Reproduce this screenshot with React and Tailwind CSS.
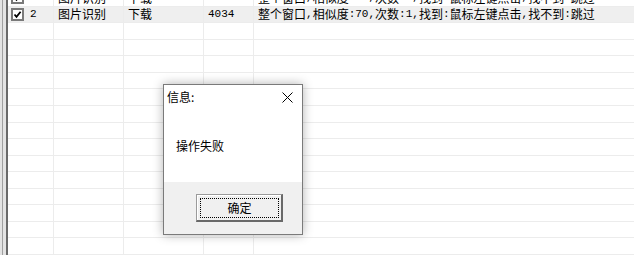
const rows = [
  {
    no: "1",
    type: "图片识别",
    action: "下载",
    id: "4032",
    desc: "整个窗口,相似度:80,次数:1,找到:鼠标左键点击,找不到:跳过",
  },
  {
    no: "2",
    type: "图片识别",
    action: "下载",
    id: "4034",
    desc: "整个窗口,相似度:70,次数:1,找到:鼠标左键点击,找不到:跳过",
    selected: true,
  },
];

const EMPTY_ROWS = 14;

// SimSun-like half width latin: monospace runs keep ~6px per char
const Mixed = ({ text }) =>
  text.split(/([\x00-\x7f]+)/).map((part, i) =>
    /^[\x00-\x7f]+$/.test(part) ? (
      <span key={i} className="font-['Liberation_Mono',monospace] text-[11px]">
        {part}
      </span>
    ) : (
      <span key={i}>{part}</span>
    )
  );

const CheckBox = () => (
  <svg width="13" height="13" viewBox="0 0 13 13" className="shrink-0">
    <rect x="1" y="1" width="11" height="11" fill="#fff" stroke="#7a7a7a" strokeWidth="2" />
    <path d="M3.5 6.5 L5.5 8.8 L9.6 3.8" fill="none" stroke="#000" strokeWidth="1.8" />
  </svg>
);

const Cell = ({ className = "", children }) => (
  <div
    className={`h-full flex items-center border-r border-[#ececec] overflow-hidden whitespace-nowrap ${className}`}
  >
    {children}
  </div>
);

const Row = ({ row }) => (
  <div
    className={`flex h-[17px] border-b border-[#ececec] ${
      row?.selected ? "bg-[#efefef]" : "bg-white"
    }`}
  >
    <Cell className="w-[46px] pl-[3px] gap-[3px]">
      {row && (
        <>
          <CheckBox />
          <Mixed text={row.no} />
        </>
      )}
    </Cell>
    <Cell className="w-[70px] pl-[4px]">{row && row.type}</Cell>
    <Cell className="w-[80px] pl-[4px]">{row && row.action}</Cell>
    <Cell className="w-[50px] pl-[4px]">{row && <Mixed text={row.id} />}</Cell>
    <Cell className="flex-1 pl-[4px] border-r-0">{row && <Mixed text={row.desc} />}</Cell>
  </div>
);

const MessageDialog = () => (
  <div className="absolute left-[163px] top-[84px] w-[140px] h-[151px] border border-[#7a7a7a] bg-white flex flex-col shadow-[0_0_10px_rgba(0,0,0,0.3)]">
    <div className="h-[24px] flex items-center justify-between pl-[3px] pr-[9px]">
      <span>信息:</span>
      <svg width="11" height="11" viewBox="0 0 11 11">
        <path d="M0.5 0.5 L10.5 10.5 M10.5 0.5 L0.5 10.5" stroke="#000" strokeWidth="1" />
      </svg>
    </div>
    <div className="flex-1 pl-[12px] pt-[31px]">操作失败</div>
    <div className="h-[52px] bg-[#f0f0f0] pl-[32px] pt-[12px]">
      <button className="w-[87px] h-[28px] border border-[#9a9a9a] border-r-2 border-b-2 border-r-[#696969] border-b-[#696969] bg-[#f0f0f0] p-0">
        <div className="h-full border-t border-l border-white p-[2px]">
          <div className="h-full border border-dotted border-black flex items-center justify-center pb-[1px]">
            确定
          </div>
        </div>
      </button>
    </div>
  </div>
);

export default function App() {
  return (
    <div className="relative w-[634px] h-[255px] overflow-hidden bg-white text-[12px] leading-none text-black font-['Noto_Sans_CJK_SC','Noto_Sans',sans-serif]">
      <div className="flex h-full">
        <div className="flex shrink-0">
          <div className="w-[2px] bg-[#e3e3e3]" />
          <div className="w-[1px] bg-[#a0a0a0]" />
          <div className="w-[3px] bg-[#e3e3e3]" />
          <div className="w-[2px] bg-[#696969]" />
        </div>
        <div className="flex-1 flex flex-col mt-[-10px]">
          {rows.map((r) => (
            <Row key={r.no} row={r} />
          ))}
          {Array.from({ length: EMPTY_ROWS }).map((_, i) => (
            <Row key={`e${i}`} />
          ))}
        </div>
      </div>
      <MessageDialog />
    </div>
  );
}
